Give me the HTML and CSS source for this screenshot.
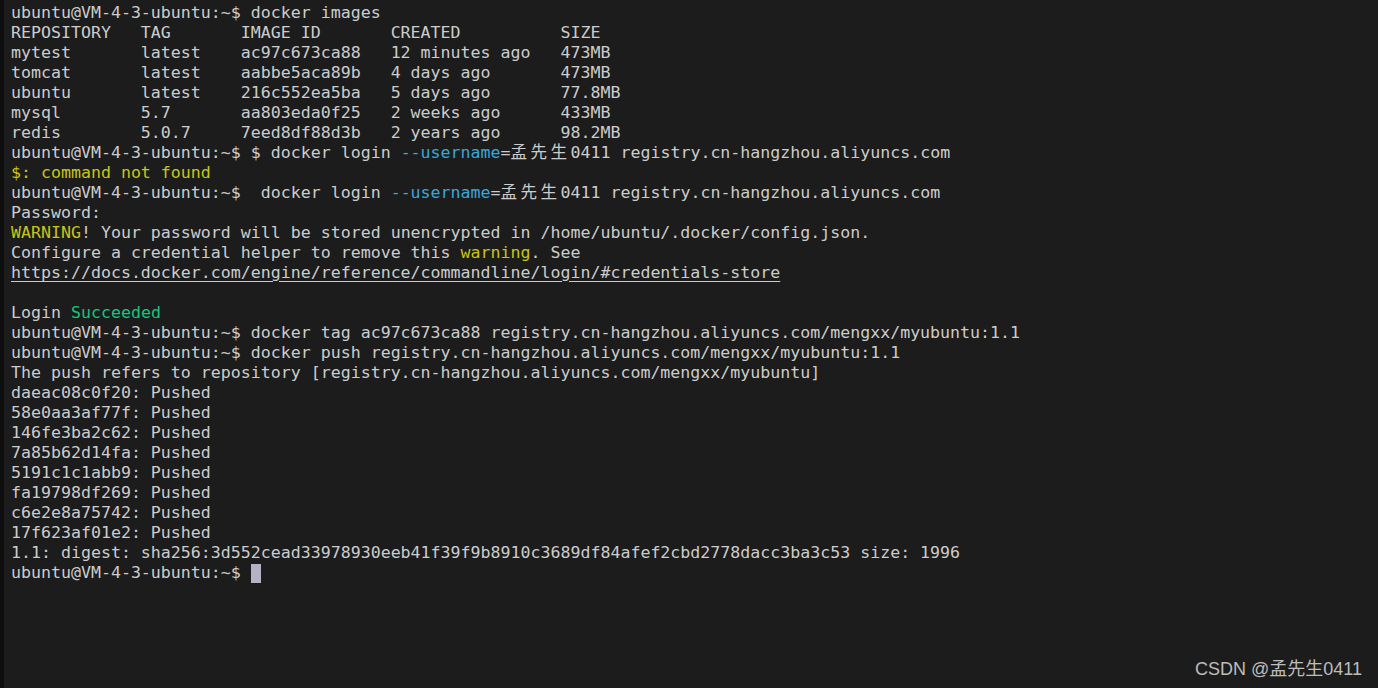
FILE: index.html
```html
<!DOCTYPE html>
<html lang="en">
<head>
    <meta charset="UTF-8">
    <title>ubuntu@VM-4-3-ubuntu: ~</title>
    <link rel="stylesheet" href="styles.css">
</head>
<body>
    <div class="screen">
<pre class="term">ubuntu@VM-4-3-ubuntu:~$ docker images
REPOSITORY   TAG       IMAGE ID       CREATED          SIZE
mytest       latest    ac97c673ca88   12 minutes ago   473MB
tomcat       latest    aabbe5aca89b   4 days ago       473MB
ubuntu       latest    216c552ea5ba   5 days ago       77.8MB
mysql        5.7       aa803eda0f25   2 weeks ago      433MB
redis        5.0.7     7eed8df88d3b   2 years ago      98.2MB
ubuntu@VM-4-3-ubuntu:~$ $ docker login <span class="cyan">--username</span>=<span class="cjk">孟先生</span>0411 registry.cn-hangzhou.aliyuncs.com
<span class="yellow">$: command not found</span>
ubuntu@VM-4-3-ubuntu:~$  docker login <span class="cyan">--username</span>=<span class="cjk">孟先生</span>0411 registry.cn-hangzhou.aliyuncs.com
Password:
<span class="yellow">WARNING</span>! Your password will be stored unencrypted in /home/ubuntu/.docker/config.json.
Configure a credential helper to remove this <span class="yellow">warning</span>. See
<span class="link">https://docs.docker.com/engine/reference/commandline/login/#credentials-store</span>

Login <span class="green">Succeeded</span>
ubuntu@VM-4-3-ubuntu:~$ docker tag ac97c673ca88 registry.cn-hangzhou.aliyuncs.com/mengxx/myubuntu:1.1
ubuntu@VM-4-3-ubuntu:~$ docker push registry.cn-hangzhou.aliyuncs.com/mengxx/myubuntu:1.1
The push refers to repository [registry.cn-hangzhou.aliyuncs.com/mengxx/myubuntu]
daeac08c0f20: Pushed
58e0aa3af77f: Pushed
146fe3ba2c62: Pushed
7a85b62d14fa: Pushed
5191c1c1abb9: Pushed
fa19798df269: Pushed
c6e2e8a75742: Pushed
17f623af01e2: Pushed
1.1: digest: sha256:3d552cead33978930eeb41f39f9b8910c3689df84afef2cbd2778dacc3ba3c53 size: 1996
ubuntu@VM-4-3-ubuntu:~$ <span class="cursor"> </span></pre>
        <div class="watermark">CSDN @孟先生0411</div>
    </div>
</body>
</html>
```
FILE: styles.css
```css
html, body {
    margin: 0;
    padding: 0;
    background-color: #1c1c1c;
}
.screen {
    position: relative;
    width: 1374px;
    height: 688px;
    border-left: 4px solid #0e0e0e;
    background-color: #1c1c1c;
    overflow: hidden;
}
.term {
    margin: 0;
    padding: 3px 0 0 7px;
    font-family: "DejaVu Sans Mono", "Noto Sans CJK SC", monospace;
    font-size: 16.6px;
    line-height: 20px;
    color: #cccccc;
    white-space: pre;
}
.cjk {
    font-family: "Noto Sans CJK SC", sans-serif;
    letter-spacing: 3.4px;
    line-height: 10px;
}
.cyan {
    color: #3aa6da;
}
.yellow {
    color: #c8c41a;
}
.green {
    color: #16c67a;
}
.link {
    text-decoration: underline;
    text-underline-offset: 3px;
}
.cursor {
    display: inline-block;
    width: 10px;
    height: 19px;
    vertical-align: top;
    margin-top: 1px;
    background-color: #b4b2c4;
}
.watermark {
    position: absolute;
    right: 16px;
    bottom: 8px;
    font-family: "Liberation Sans", "Noto Sans CJK SC", sans-serif;
    font-size: 18px;
    color: #bdbdbd;
}
```
